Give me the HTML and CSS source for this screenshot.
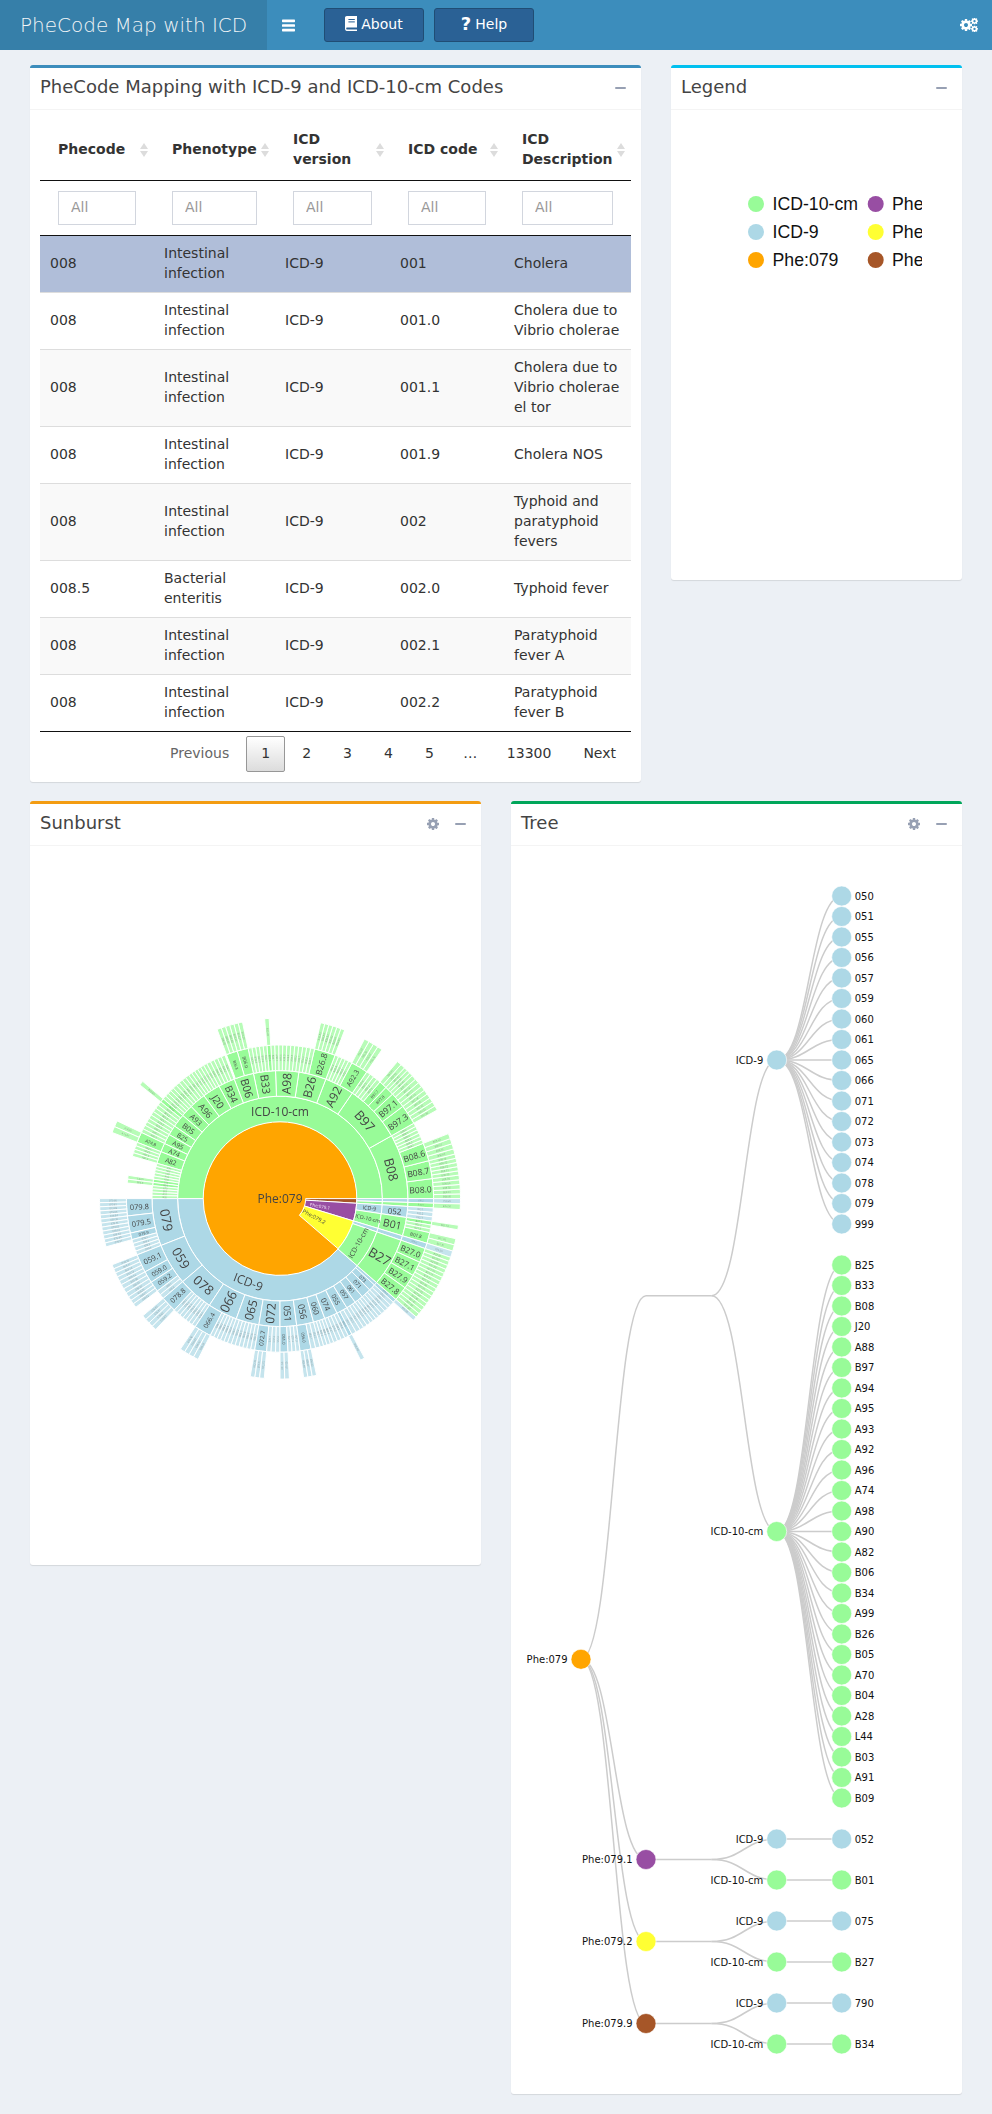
FILE: index.html
```html
<!DOCTYPE html>
<html lang="en">
<head>
<meta charset="utf-8">
<title>PheCode Map with ICD</title>
<link rel="stylesheet" href="styles.css">
</head>
<body>
<svg class="defs" aria-hidden="true">
  <symbol id="cog" viewBox="0 0 1536 1536"><path d="M1024 768q0-106-75-181t-181-75-181 75-75 181 75 181 181 75 181-75 75-181zm512-109v222q0 12-8 23t-20 13l-185 28q-19 54-39 91 35 50 107 138 10 12 10 25t-9 23q-27 37-99 108t-94 71q-12 0-26-9l-138-108q-44 23-91 38-16 136-29 186-7 28-36 28h-222q-14 0-24.5-8.5t-11.5-21.5l-28-184q-49-16-90-37l-141 107q-10 9-25 9-14 0-25-11-126-114-165-168-7-10-7-23 0-12 8-23 15-21 51-66.5t54-70.5q-27-50-41-99l-183-27q-13-2-21-12.5t-8-23.5v-222q0-12 8-23t19-13l186-28q14-46 39-92-40-57-107-138-10-12-10-24 0-10 9-23 26-36 98.5-107.5t94.5-71.5q13 0 26 10l138 107q44-23 91-38 16-136 29-186 7-28 36-28h222q14 0 24.5 8.5t11.5 21.5l28 184q49 16 90 37l142-107q9-9 24-9 13 0 25 10 129 119 165 170 7 8 7 22 0 12-8 23-15 21-51 66.5t-54 70.5q26 50 41 98l183 28q13 2 21 12.5t8 23.5z"/></symbol>
</svg>
<header class="topbar">
  <div class="logo">PheCode Map with ICD</div>
  <nav class="nav">
    <span class="toggle"><svg class="bars" viewBox="0 0 12 12"><rect y="0.5" width="12" height="2.4" rx="0.6"/><rect y="4.8" width="12" height="2.4" rx="0.6"/><rect y="9.1" width="12" height="2.4" rx="0.6"/></svg></span>
    <a class="navbtn"><svg class="book" viewBox="0 0 12 15"><path d="M1.8 0H12V11.6H2.2C1.4 11.6 1.2 12.1 1.2 12.6S1.5 13.6 2.2 13.6H12V15H1.8C.8 15 0 14 0 12.6V1.8C0 .8.8 0 1.8 0Z"/><rect class="bookline" x="3.4" y="3" width="6.4" height="1"/><rect class="bookline" x="3.4" y="5.4" width="6.4" height="1"/></svg>About</a>
    <a class="navbtn"><span class="qmark">?</span>Help</a>
  </nav>
  <svg class="cogs" viewBox="0 0 18 14"><use href="#cog" x="0" y="1" width="12" height="12"/><use href="#cog" x="11" y="-0.4" width="7" height="7"/><use href="#cog" x="11" y="7.4" width="7" height="7"/></svg>
</header>

<main class="content">
  <section class="row row-top">
    <article class="box box-primary">
      <div class="box-head">
        <h3>PheCode Mapping with ICD-9 and ICD-10-cm Codes</h3>
        <div class="tools"><span class="minus"></span></div>
      </div>
      <div class="box-body">
        <table class="dt">
          <colgroup><col class="c1"><col class="c2"><col class="c3"><col class="c4"><col class="c5"></colgroup>
          <thead>
            <tr>
              <th class="sort">Phecode</th>
              <th class="sort">Phenotype</th>
              <th class="sort">ICD version</th>
              <th class="sort">ICD code</th>
              <th class="sort">ICD Description</th>
            </tr>
            <tr class="filters">
              <th><input type="text" placeholder="All"></th>
              <th><input type="text" placeholder="All"></th>
              <th><input type="text" placeholder="All"></th>
              <th><input type="text" placeholder="All"></th>
              <th><input type="text" placeholder="All"></th>
            </tr>
          </thead>
          <tbody>
            <tr class="selected"><td>008</td><td>Intestinal infection</td><td>ICD-9</td><td>001</td><td>Cholera</td></tr>
            <tr><td>008</td><td>Intestinal infection</td><td>ICD-9</td><td>001.0</td><td>Cholera due to Vibrio cholerae</td></tr>
            <tr class="odd"><td>008</td><td>Intestinal infection</td><td>ICD-9</td><td>001.1</td><td>Cholera due to Vibrio cholerae el tor</td></tr>
            <tr><td>008</td><td>Intestinal infection</td><td>ICD-9</td><td>001.9</td><td>Cholera NOS</td></tr>
            <tr class="odd"><td>008</td><td>Intestinal infection</td><td>ICD-9</td><td>002</td><td>Typhoid and paratyphoid fevers</td></tr>
            <tr><td>008.5</td><td>Bacterial enteritis</td><td>ICD-9</td><td>002.0</td><td>Typhoid fever</td></tr>
            <tr class="odd"><td>008</td><td>Intestinal infection</td><td>ICD-9</td><td>002.1</td><td>Paratyphoid fever A</td></tr>
            <tr><td>008</td><td>Intestinal infection</td><td>ICD-9</td><td>002.2</td><td>Paratyphoid fever B</td></tr>
          </tbody>
        </table>
        <div class="pager">
          <a class="page disabled">Previous</a>
          <a class="page current">1</a>
          <a class="page">2</a>
          <a class="page">3</a>
          <a class="page">4</a>
          <a class="page">5</a>
          <span class="page ellipsis">…</span>
          <a class="page">13300</a>
          <a class="page">Next</a>
        </div>
      </div>
    </article>

    <article class="box box-info">
      <div class="box-head">
        <h3>Legend</h3>
        <div class="tools"><span class="minus"></span></div>
      </div>
      <div class="box-body">
        <svg class="legend" viewBox="681 120 241 450">
          <g class="legend-text">
            <circle cx="756" cy="204" r="8" fill="#98fb98"/><text x="772.5" y="210">ICD-10-cm</text>
            <circle cx="756" cy="232" r="8" fill="#add8e6"/><text x="772.5" y="238">ICD-9</text>
            <circle cx="756" cy="260" r="8" fill="#ffa500"/><text x="772.5" y="266">Phe:079</text>
            <circle cx="875.7" cy="204" r="8" fill="#984ea3"/><text x="892" y="210">Phe:079.1</text>
            <circle cx="875.7" cy="232" r="8" fill="#ffff33"/><text x="892" y="238">Phe:079.2</text>
            <circle cx="875.7" cy="260" r="8" fill="#a65628"/><text x="892" y="266">Phe:079.9</text>
          </g>
        </svg>
      </div>
    </article>
  </section>

  <section class="row row-bottom">
    <article class="box box-warning">
      <div class="box-head">
        <h3>Sunburst</h3>
        <div class="tools"><svg class="gear" viewBox="0 0 1536 1536"><use href="#cog"/></svg><span class="minus"></span></div>
      </div>
      <div class="box-body">
        <svg id="sunburst" class="sunburst" viewBox="40 855 431 700"></svg>
      </div>
    </article>

    <article class="box box-success">
      <div class="box-head">
        <h3>Tree</h3>
        <div class="tools"><svg class="gear" viewBox="0 0 1536 1536"><use href="#cog"/></svg><span class="minus"></span></div>
      </div>
      <div class="box-body">
        <svg id="tree" class="tree" viewBox="521 856 431 1229"></svg>
      </div>
    </article>
  </section>
</main>
<script src="app.js"></script>
</body>
</html>
```
FILE: styles.css
```css
* { box-sizing: border-box; }
html, body { margin: 0; padding: 0; }
body {
  background: #ecf0f5;
  color: #333;
  font-family: "DejaVu Sans", sans-serif;
  font-size: 14px;
  line-height: 20px;
  height: 2114px;
  overflow: hidden;
}
.defs { display: none; }

.topbar {
  display: flex;
  align-items: center;
  height: 50px;
  background: #3c8dbc;
  color: #fff;
}
.logo {
  width: 267px;
  height: 50px;
  padding-left: 20px;
  background: #367fa9;
  color: #f2f5f7;
  font-size: 20px;
  font-weight: 200;
  line-height: 50px;
  white-space: nowrap;
}
.nav { display: flex; align-items: center; flex: 1; }
.toggle { display: flex; width: 57px; padding-left: 15px; }
.bars { width: 13px; height: 13px; fill: #fff; }
.navbtn {
  display: flex;
  align-items: center;
  justify-content: center;
  gap: 4px;
  width: 100px;
  height: 34px;
  margin-right: 10px;
  padding-bottom: 3px;
  background: #2a6195;
  border: 1px solid #204d74;
  border-radius: 3px;
  color: #fff;
}
.book { width: 12px; height: 15px; fill: #fff; }
.bookline { fill: #2a6195; }
.qmark { font-size: 18px; font-weight: 700; }
.cogs { width: 18px; height: 14px; margin-right: 14px; fill: #fff; }

.content { padding: 15px 30px 0; }
.row { display: flex; gap: 30px; align-items: flex-start; }
.row-bottom { margin-top: 19px; }

.box {
  background: #fff;
  border-top: 3px solid #3c8dbc;
  border-radius: 3px;
  box-shadow: 0 1px 1px rgba(0, 0, 0, .1);
}
.box-primary { width: 611px; }
.box-info { width: 291px; height: 515px; border-top-color: #00c0ef; }
.box-warning { width: 451px; height: 764px; border-top-color: #f39c12; }
.box-success { width: 451px; height: 1293px; border-top-color: #00a65a; }

.box-head {
  display: flex;
  align-items: center;
  justify-content: space-between;
  height: 42px;
  padding: 0 15px 2px 10px;
  border-bottom: 1px solid #f4f4f4;
}
.box-head h3 {
  margin: 0 0 2px;
  color: #444;
  font-size: 18px;
  font-weight: 400;
}
.tools { display: flex; align-items: center; gap: 16px; }
.minus { display: block; width: 11px; height: 2px; background: #97a0b3; border-radius: 1px; }
.gear { width: 12px; height: 12px; fill: #97a0b3; }
.box-body { padding: 10px; }

.dt {
  width: 591px;
  table-layout: fixed;
  border-collapse: separate;
  border-spacing: 0;
}
.c1 { width: 114px; }
.c2 { width: 121px; }
.c3 { width: 115px; }
.c4 { width: 114px; }
.c5 { width: 127px; }
.dt th {
  position: relative;
  padding: 9px 18px 11px;
  border-bottom: 1px solid #111;
  font-weight: 700;
  text-align: left;
  vertical-align: middle;
}
.dt .filters th { padding: 10px 18px; }
.sort::before, .sort::after {
  content: "";
  position: absolute;
  right: 6px;
  border-left: 4px solid transparent;
  border-right: 4px solid transparent;
}
.sort::before { top: 23px; border-bottom: 6px solid #dcdcdc; }
.sort::after { top: 31px; border-top: 6px solid #dcdcdc; }
.dt input {
  display: block;
  width: 100%;
  height: 34px;
  padding: 5px 12px 8px;
  background: #fff;
  border: 1px solid #d2d6de;
  font: 400 14px "DejaVu Sans", sans-serif;
  outline: none;
}
.dt input::placeholder { color: #999; opacity: 1; }
.dt td {
  padding: 7px 10px 9px;
  border-top: 1px solid #ddd;
  vertical-align: middle;
}
.dt tbody tr:first-child td { border-top: 0; }
.dt tbody tr:last-child td { border-bottom: 1px solid #111; }
.dt .odd td { background: #f9f9f9; }
.dt .selected td { background: #b0bed9; }

.pager {
  display: flex;
  justify-content: flex-end;
  gap: 2px;
  padding-top: 4px;
}
.page {
  padding: 6px 14px 8px;
  border: 1px solid transparent;
  border-radius: 2px;
  color: #333;
}
.page.disabled { color: #666; }
.page.current {
  background: linear-gradient(to bottom, #fff, #dcdcdc);
  border-color: #979797;
}
.page.ellipsis { padding: 7px 12.5px 7px; border: 0; }

.legend { display: block; width: 241px; height: 450px; }
.legend-text { font: 17.7px "Liberation Sans", Arial, sans-serif; fill: #111; }

.sunburst { display: block; width: 431px; height: 700px; filter: blur(.3px); }
.sun-label { font-family: "Open Sans", "DejaVu Sans", sans-serif; fill: #444; text-anchor: middle; dominant-baseline: central; }
.sun-light { fill: #f4e6f6; }
.sun-tiny { fill-opacity: .45; }
.sun-sector { stroke: #fff; stroke-width: 1; }

.tree { display: block; width: 431px; height: 1229px; }
.tree-link { fill: none; stroke: #ccc; stroke-width: 1.5; }
.tree-node { stroke: #fff; stroke-width: .6; }
.tree-label { font: 10px "DejaVu Sans", sans-serif; fill: #111; dominant-baseline: central; }
.anchor-end { text-anchor: end; }
```
FILE: app.js
```js
const NS = 'http://www.w3.org/2000/svg';
const G = '#98fb98', B = '#add8e6', O = '#ffa500', P = '#984ea3', Y = '#ffff33', W = '#a65628';

function el(parent, name, attrs, text) {
  const e = document.createElementNS(NS, name);
  for (const k in attrs) e.setAttribute(k, attrs[k]);
  if (text !== undefined) e.textContent = text;
  parent.appendChild(e);
  return e;
}

/* ---------- sunburst ---------- */
const sun = document.getElementById('sunburst');
const CX = 280, CY = 1197.6;
const R = [25.6, 76.8, 102.4, 128, 153.6, 180.5];
const UNIT = 1.45;
const TINY = 2.5;

function pt(r, a) {
  const t = a * Math.PI / 180;
  return (CX + r * Math.cos(t)).toFixed(2) + ' ' + (CY + r * Math.sin(t)).toFixed(2);
}
function sector(r0, r1, a0, a1, fill, opacity) {
  const lo = Math.min(a0, a1), hi = Math.max(a0, a1);
  const large = hi - lo > 180 ? 1 : 0;
  const d = 'M' + pt(r0, lo) + 'A' + r0 + ' ' + r0 + ' 0 ' + large + ' 1 ' + pt(r0, hi) +
    'L' + pt(r1, hi) + 'A' + r1 + ' ' + r1 + ' 0 ' + large + ' 0 ' + pt(r1, lo) + 'Z';
  el(sun, 'path', { d: d, fill: fill, 'fill-opacity': opacity === undefined ? 1 : opacity, class: 'sun-sector' });
}
function radialRot(a) {
  let n = ((a + 180) % 360 + 360) % 360 - 180;
  return Math.abs(n) > 90 ? n + 180 : n;
}
function tangentRot(a) {
  let n = ((a + 180) % 360 + 360) % 360 - 180;
  return n > 0 ? n - 90 : n + 90;
}
const labels = [];
function label(r, a, text, size, mode, cls) {
  const rot = mode === 't' ? tangentRot(a) : radialRot(a);
  const t = a * Math.PI / 180;
  const x = CX + r * Math.cos(t), y = CY + r * Math.sin(t);
  labels.push({ x: x, y: y, text: text, size: size, rot: rot, cls: cls || (size <= TINY ? 'sun-tiny' : '') });
}

function drawKids(parent, from, to, color, kids) {
  const dir = to >= from ? 1 : -1;
  let a = from, i = 1;
  for (const k of kids) {
    const next = a + dir * k[1];
    const n = k[3];
    sector(R[3], R[4], a, next, color, n ? 1 : 0.7);
    label((R[3] + R[4]) / 2, (a + next) / 2, k[0], k[2], 'r');
    for (let j = 0; j < n; j++) {
      const s = a + dir * k[1] * j / n, e = a + dir * k[1] * (j + 1) / n;
      sector(R[4], R[5], s, e, color, 0.7);
      label((R[4] + R[5]) / 2, (s + e) / 2, k[0] + j, TINY, 'r');
    }
    a = next;
  }
  const rest = Math.abs(to - a);
  const m = Math.round(rest / UNIT);
  for (let j = 0; j < m; j++) {
    const s = a + dir * rest * j / m, e = a + dir * rest * (j + 1) / m;
    sector(R[3], R[4], s, e, color, 0.7);
    label((R[3] + R[4]) / 2, (s + e) / 2, parent + '.' + (i++), TINY, 'r');
  }
}

function node3(name, from, to, color, size, mode, kids) {
  sector(R[2], R[3], from, to, color, kids === null ? 0.7 : 1);
  if (size) label((R[2] + R[3]) / 2, (from + to) / 2, name, size, mode);
  if (kids) drawKids(name, from, to, color, kids);
}

/* centre */
el(sun, 'circle', { cx: CX, cy: CY, r: R[1], fill: O });
sector(R[0], R[1], 0, 3.5, W);
sector(R[0], R[1], 3.5, 16.9, P);
sector(R[0], R[1], 16.9, 40.8, Y);
label(42, 1.75, 'Phe:079.9', 2.5, 'r');
label(40.7, 10.4, 'Phe:079.1', 4.5, 'r', 'sun-light');
label(38.6, 28, 'Phe:079.2', 5.5, 'r');

/* second ring */
sector(R[1], R[2], 0, -180, G);
sector(R[1], R[2], 180, 41, B);
sector(R[1], R[2], 0, 1.7, B);
sector(R[1], R[2], 1.7, 3.5, G);
sector(R[1], R[2], 3.5, 8.5, B);
sector(R[1], R[2], 8.5, 16.9, G);
sector(R[1], R[2], 16.9, 19, B);
sector(R[1], R[2], 19, 41, G);
label(87, -90, 'ICD-10-cm', 12, 't');
label(89, 110.8, 'ICD-9', 12, 't');
label(90, 6, 'ICD-9', 5.5, 'r');
label(90, 12.7, 'ICD-10-cm', 5.3, 'r');
label(90, 29.5, 'ICD-10-cm', 7, 't');

/* third ring + children: ICD-10-cm */
node3('B08', 0, -29.4, G, 13, 't', [['B08.0', 7.5, 8.5, 5], ['B08.7', 6.8, 8.5, 5], ['B08.6', 6.8, 8.5, 4]]);
node3('B97', -29.4, -55.6, G, 13, 't', [['B97.3', 7.5, 8.5, 5], ['B97.1', 6, 8.5, 4], ['B97.8', 3.5, 4, 3], ['B97.7', 3, 3.6, 2]]);
node3('A92', -55.6, -69, G, 12, 'r', [['A92.3', 6.5, 7, 4]]);
node3('B26', -69, -81.5, G, 12, 'r', [['B26.8', 8, 8.5, 6]]);
node3('A98', -81.5, -92, G, 12, 'r', []);
node3('B33', -92, -102, G, 11, 'r', [['B33.1', UNIT, TINY, 0], ['B33.2', UNIT, TINY, 1]]);
node3('B06', -102, -111, G, 11, 'r', [['B06.0', 4.2, 4.5, 3], ['B06.8', 4.2, 3.6, 3]]);
node3('B34', -111, -118.5, G, 10, 'r', []);
node3('J20', -118.5, -126.5, G, 10, 'r', []);
node3('A96', -126.5, -134, G, 9, 'r', []);
node3('A93', -134, -139.5, G, 7.5, 'r', []);
node3('B05', -139.5, -145.5, G, 7.5, 'r', [['B05.8', UNIT, TINY, 1]]);
node3('B25', -145.5, -150, G, 6.5, 'r', []);
node3('A95', -150, -154.5, G, 6.5, 'r', []);
node3('A74', -154.5, -158.5, G, 6.5, 'r', [['A74.8', 4, 4.5, 2]]);
node3('A82', -158.5, -164, G, 6.5, 'r', []);
['A99', 'A88', 'A90', 'A94', 'A28', 'L44', 'B04', 'A70', 'B03', 'A91', 'B09'].forEach(function (n, i) {
  const a0 = -164 - i * 16 / 11, a1 = a0 - 16 / 11;
  sector(R[2], R[3], a0, a1, G, (i === 5 || i === 6) ? 1 : 0.7);
  label((R[2] + R[3]) / 2, (a0 + a1) / 2, n, TINY, 'r');
  if (i === 5 || i === 6) {
    sector(R[3], R[4], a0, a1, G, 0.7);
    label((R[3] + R[4]) / 2, (a0 + a1) / 2, n + '.9', TINY, 'r');
  }
});

/* third ring + children: ICD-9 */
node3('079', 180, 158.5, B, 13, 't', [['079.8', 6.5, 7.5, 5], ['079.5', 6.5, 7.5, 5], ['079.9', 2.5, 4, 2]]);
node3('059', 158.5, 139.5, B, 13, 't', [['059.1', 7, 7.5, 5], ['059.0', 4.5, 6.5, 3], ['059.2', 4, 6, 3]]);
node3('078', 139.5, 123.5, B, 13, 't', [['078.8', 6, 7, 4]]);
node3('066', 123.5, 110, B, 13, 'r', [['066.4', 6.5, 6.5, 4]]);
node3('065', 110, 99.5, B, 12, 'r', []);
node3('072', 99.5, 90, B, 12, 'r', [['072.7', 4.5, 6, 3]]);
node3('051', 90, 82.5, B, 9.5, 'r', [['051.0', 3, 4, 2]]);
node3('056', 82.5, 74.8, B, 9, 'r', [['056.0', 4.2, 4, 3]]);
node3('060', 74.8, 69.5, B, 7.5, 'r', []);
node3('074', 69.5, 63.5, B, 7.5, 'r', []);
node3('055', 63.5, 58.5, B, 6.5, 'r', [['055.9', UNIT, TINY, 1]]);
node3('057', 58.5, 54, B, 6, 'r', []);
node3('061', 54, 50, B, 5.5, 'r', []);
node3('071', 50, 45.5, B, 5.5, 'r', []);
node3('073', 45.5, 42.4, B, 4.5, 'r', []);
node3('999', 42.4, 41, B, 0, 'r', [['999.9', 1.4, TINY, 1]]);

/* third ring + children: small branches on the right */
node3('790', 0, 1.7, B, 0, 'r', [['790.2', 1.7, 2.2, 1]]);
node3('B34', 1.7, 3.5, G, 0, 'r', [['B34.9', 1.8, 2.2, 1]]);
node3('052', 3.5, 8.5, B, 8, 'r', []);
node3('B01', 8.5, 16.9, G, 10.5, 'r', [['B01.1', UNIT, TINY, 1], ['B01.2', UNIT, TINY, 0], ['B01.3', UNIT, TINY, 0], ['B01.8', 4.05, 4.5, 2]]);
node3('075', 16.9, 19, B, 0, 'r', [['075.0', 2.1, 2.2, 1]]);
node3('B27', 19, 41, G, 13, 'r', [['B27.0', 5.5, 8, 4], ['B27.1', 5.5, 8, 4], ['B27.9', 5.5, 8, 4], ['B27.8', 5.5, 8, 4]]);

label(0, 0, 'Phe:079', 12, 'r');
labels.forEach(function (l) {
  el(sun, 'text', {
    class: 'sun-label' + (l.cls ? ' ' + l.cls : ''),
    'font-size': l.size,
    transform: 'translate(' + l.x.toFixed(2) + ' ' + l.y.toFixed(2) + ') rotate(' + l.rot.toFixed(1) + ')'
  }, l.text);
});

/* ---------- tree ---------- */
const tree = document.getElementById('tree');
const X = [581, 646, 711.5, 776.7, 841.7];
const STEP = 20.5;
const y0 = 896;
const icd9 = ['050', '051', '055', '056', '057', '059', '060', '061', '065', '066', '071', '072', '073', '074', '078', '079', '999'];
const icd10 = ['B25', 'B33', 'B08', 'J20', 'A88', 'B97', 'A94', 'A95', 'A93', 'A92', 'A96', 'A74', 'A98', 'A90', 'A82', 'B06', 'B34', 'A99', 'B26', 'B05', 'A70', 'B04', 'A28', 'L44', 'B03', 'A91', 'B09'];
const links = [], nodes = [];

function link(x0, ya, x1, yb) {
  const m = (x0 + x1) / 2;
  links.push('M' + x0 + ' ' + ya + 'C' + m + ' ' + ya + ' ' + m + ' ' + yb + ' ' + x1 + ' ' + yb);
}
function node(x, y, name, color, after) {
  nodes.push({ x: x, y: y, name: name, color: color, after: after });
}
function branch(name, color, y, leaves, start) {
  leaves.forEach(function (l, i) {
    const ly = start + i * STEP;
    link(X[3], y, X[4], ly);
    node(X[4], ly, l, color, true);
  });
  node(X[3], y, name, color, false);
}

const y9 = y0 + 8 * STEP;
const start10 = y0 + 16 * STEP + 2 * STEP;
const y10 = start10 + 13 * STEP;
const yMid = (y9 + y10) / 2;
const rootY = 1659.3;
link(X[0], rootY, X[1], yMid);
link(X[1], yMid, X[2], yMid);
link(X[2], yMid, X[3], y9);
link(X[2], yMid, X[3], y10);
branch('ICD-9', B, y9, icd9, y0);
branch('ICD-10-cm', G, y10, icd10, start10);

[['Phe:079.1', P, ['052', 'B01']], ['Phe:079.2', Y, ['075', 'B27']], ['Phe:079.9', W, ['790', 'B34']]].forEach(function (p, i) {
  const top = start10 + 28 * STEP + i * 4 * STEP;
  const py = top + STEP;
  link(X[0], rootY, X[1], py);
  link(X[1], py, X[2], py);
  link(X[2], py, X[3], top);
  link(X[2], py, X[3], top + 2 * STEP);
  link(X[3], top, X[4], top);
  link(X[3], top + 2 * STEP, X[4], top + 2 * STEP);
  node(X[1], py, p[0], p[1], false);
  node(X[3], top, 'ICD-9', B, false);
  node(X[3], top + 2 * STEP, 'ICD-10-cm', G, false);
  node(X[4], top, p[2][0], B, true);
  node(X[4], top + 2 * STEP, p[2][1], G, true);
});
node(X[0], rootY, 'Phe:079', O, false);

links.forEach(function (d) { el(tree, 'path', { d: d, class: 'tree-link' }); });
nodes.forEach(function (n) {
  el(tree, 'circle', { cx: n.x, cy: n.y, r: 10, fill: n.color, class: 'tree-node' });
  el(tree, 'text', {
    x: n.after ? n.x + 13 : n.x - 13.4,
    y: n.y,
    class: 'tree-label' + (n.after ? '' : ' anchor-end')
  }, n.name);
});
```
